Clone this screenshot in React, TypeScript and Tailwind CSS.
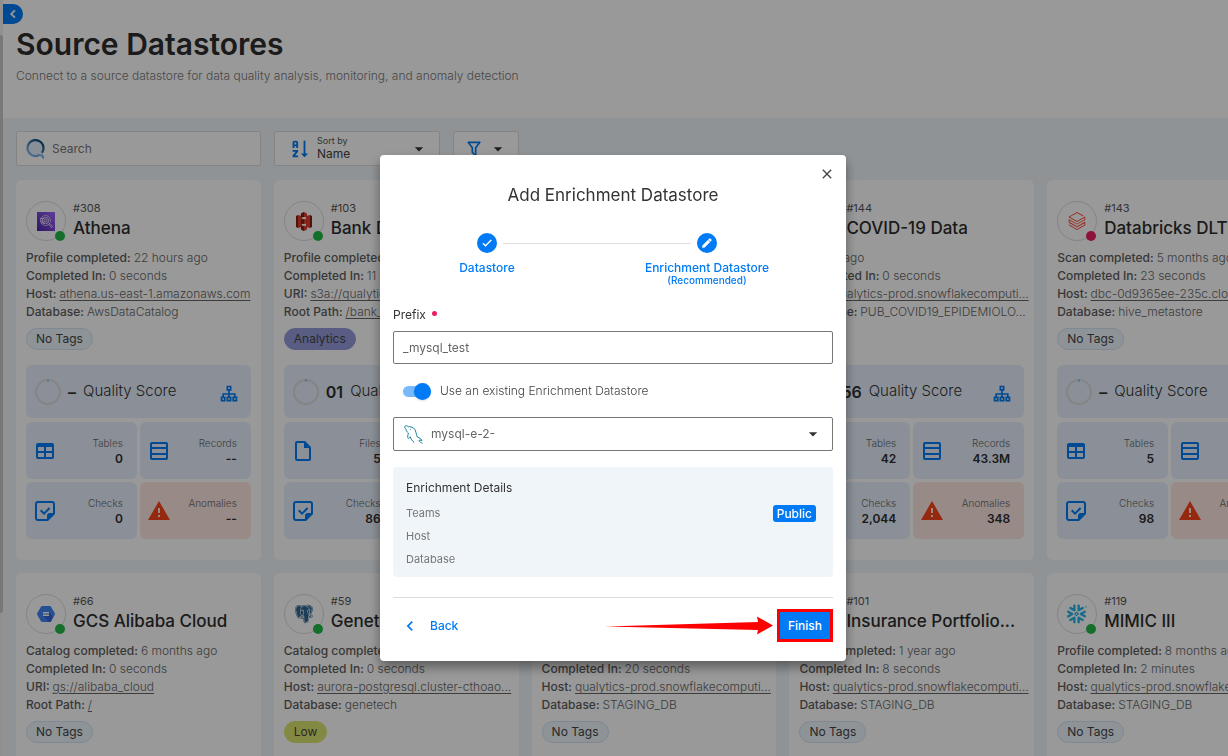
import type { ReactNode } from 'react';
import { BiLogoPostgresql } from 'react-icons/bi';
import { SiDatabricks, SiSnowflake } from 'react-icons/si';
import { TbBrandMysql } from 'react-icons/tb';

const icons = {
  table:
    'M5,4H19A2,2 0 0,1 21,6V18A2,2 0 0,1 19,20H5A2,2 0 0,1 3,18V6A2,2 0 0,1 5,4M5,8V12H11V8H5M13,8V12H19V8H13M5,14V18H11V14H5M13,14V18H19V14H13Z',
  file: 'M14,2H6A2,2 0 0,0 4,4V20A2,2 0 0,0 6,22H18A2,2 0 0,0 20,20V8L14,2M18,20H6V4H13V9H18V20Z',
  records:
    'M5,3H19A2,2 0 0,1 21,5V19A2,2 0 0,1 19,21H5A2,2 0 0,1 3,19V5A2,2 0 0,1 5,3M5,5V8H19V5H5M5,10V14H19V10H5M5,16V19H19V16H5Z',
  checks:
    'M5,2H19A3,3 0 0,1 22,5V15L15,22H5A3,3 0 0,1 2,19V5A3,3 0 0,1 5,2M5,4A1,1 0 0,0 4,5V19A1,1 0 0,0 5,20H14V17A3,3 0 0,1 17,14H20V5A1,1 0 0,0 19,4H5M8.4,10.6L11,13.2L15.9,8.3L17.3,9.7L11,16L7,12L8.4,10.6Z',
  alert: 'M13 14H11V9H13M13 18H11V16H13M1 21H23L12 2L1 21Z',
  sitemap:
    'M9,2H15V8H13V11H20V15H22V21H16V15H18V13H13V15H15V21H9V15H11V13H6V15H8V21H2V15H4V11H11V8H9V2M11,4V6H13V4H11M4,17V19H6V17H4M11,17V19H13V17H11M18,17V19H20V17H18Z',
  sort: 'M19 17H22L18 21L14 17H17V3H19M11 13V15L7.67 19H11V21H5V19L8.33 15H5V13M9 3H7C5.9 3 5 3.9 5 5V11H7V9H9V11H11V5C11 3.9 10.11 3 9 3M9 7H7V5H9Z',
  filter:
    'M15,19.88C15.04,20.18 14.94,20.5 14.71,20.71C14.32,21.1 13.69,21.1 13.3,20.71L9.29,16.7C9.06,16.47 8.96,16.16 9,15.87V10.75L4.21,4.62C3.87,4.19 3.95,3.56 4.38,3.22C4.57,3.08 4.78,3 5,3H19C19.22,3 19.43,3.08 19.62,3.22C20.05,3.56 20.13,4.19 19.79,4.62L15,10.75V19.88M7.04,5L11,10.06V15.58L13,17.58V10.05L16.96,5H7.04Z',
  caret: 'M7,10L12,15L17,10H7Z',
  chevronLeft: 'M15.41,16.58L10.83,12L15.41,7.41L14,6L8,12L14,18L15.41,16.58Z',
  check: 'M21,7L9,19L3.5,13.5L4.91,12.09L9,16.17L19.59,5.59L21,7Z',
  pencil:
    'M20.71,7.04C21.1,6.65 21.1,6 20.71,5.63L18.37,3.29C18,2.9 17.35,2.9 16.96,3.29L15.12,5.12L18.87,8.87M3,17.25V21H6.75L17.81,9.93L14.06,6.18L3,17.25Z',
  close:
    'M19,6.41L17.59,5L12,10.59L6.41,5L5,6.41L10.59,12L5,17.59L6.41,19L12,13.41L17.59,19L19,17.59L13.41,12L19,6.41Z',
};

function Icon({ name, className }: { name: keyof typeof icons; className?: string }) {
  return (
    <svg viewBox="0 0 24 24" fill="currentColor" aria-hidden="true" className={className}>
      <path d={icons[name]} />
    </svg>
  );
}

function AthenaLogo() {
  return (
    <svg viewBox="0 0 18 19" className="w-[18px] h-[19px]" aria-hidden="true">
      <defs>
        <linearGradient id="athena" x1="0" y1="1" x2="1" y2="0">
          <stop offset="0" stopColor="#4d27a8" />
          <stop offset="1" stopColor="#a166ff" />
        </linearGradient>
      </defs>
      <rect width="18" height="19" fill="url(#athena)" />
      <g fill="none" stroke="#fff" strokeWidth="0.7">
        <circle cx="8.5" cy="8.5" r="5" strokeDasharray="2 0.6" />
        <circle cx="8.5" cy="8.5" r="3.2" />
        <circle cx="8.5" cy="8.5" r="1.4" />
        <path d="M3 6.5h4M3 9h3.5M4 11h4M11.5 12l3 3.6 1.2-1.1-3.2-3.2" />
      </g>
    </svg>
  );
}

function S3Logo() {
  return (
    <svg viewBox="0 0 16 19" className="w-4 h-[19px]" aria-hidden="true">
      <path d="M0 4l2-1v13l-2-1zM16 4l-2-1v13l2-1z" fill="#8c1c13" />
      <path d="M2 3l4 1v11l-4 1zM14 3l-4 1v11l4 1z" fill="#d9402f" />
      <path d="M8 0l3 1.5v4L8 5 5 5.5v-4zM8 19l3-1.5v-4L8 14l-3-.5v4zM8 7l3 .5v4l-3 .5-3-.5v-4z" fill="#d9402f" />
      <path d="M8 0L5 1.5v4L8 5zM8 7l-3 .5v4l3 .5zM8 14l-3-.5v4L8 19z" fill="#8c1c13" />
    </svg>
  );
}

function GcsLogo() {
  return (
    <svg viewBox="0 0 18 16" className="w-[18px] h-4" aria-hidden="true">
      <path d="M5 0h8a1 1 0 0 1 .9.5l3.9 6.8a1.4 1.4 0 0 1 0 1.4l-3.9 6.8a1 1 0 0 1-.9.5H5a1 1 0 0 1-.9-.5L.2 8.700a1.4 1.4 0 0 1 0-1.4L4.100.5A1 1 0 0 1 5 0z" fill="#4285f4" />
      <path d="M6.5 10.200L12 6l4 4.700-2.100 4.800a1 1 0 0 1-.9.5H12z" fill="#3367d6" />
      <path d="M6 6h6v1.600H6zM6 8.500h6v1.600H6z" fill="#fff" />
    </svg>
  );
}

function QLogo() {
  return (
    <svg viewBox="0 0 20 20" className="w-5 h-5 shrink-0" aria-hidden="true">
      <defs>
        <linearGradient id="q-ring" x1="1" y1="0" x2="0.2" y2="1">
          <stop offset="0.2" stopColor="#11507f" />
          <stop offset="1" stopColor="#8cc0f0" />
        </linearGradient>
      </defs>
      <circle cx="9.5" cy="9" r="7" fill="#e3eefa" />
      <path d="M12.5 16.500A8 8 0 1 1 17.500 9c0 2-.6 3.600-1.700 5" fill="none" stroke="url(#q-ring)" strokeWidth="2.200" />
      <path d="M12 16l4 0.300 1.200 2.200" fill="none" stroke="#7db4e8" strokeWidth="2.200" strokeLinecap="round" strokeLinejoin="round" />
    </svg>
  );
}

interface Tag {
  label: string;
  style: string;
}

const noTags: Tag = { label: 'No Tags', style: 'border-[#d5e3f2] bg-[#edf5fc]' };
const analytics: Tag = { label: 'Analytics', style: 'border-[#959cdd] bg-[#959cdd]' };
const low: Tag = { label: 'Low', style: 'border-[#dbe46e] bg-[#dbe46e]' };

interface Datastore {
  id: number;
  name: string;
  logo: ReactNode;
  failed?: boolean;
  facts: [label: string, value: string, link?: boolean][];
  tag: Tag;
  score: string;
  files?: boolean;
  counts: [string, string, string, string];
}

const snowflake = <SiSnowflake className="w-5 h-5 text-[#29b5e8]" />;

const datastores: Datastore[] = [
  {
    id: 308,
    name: 'Athena',
    logo: <AthenaLogo />,
    facts: [
      ['Profile completed', '22 hours ago'],
      ['Completed In', '0 seconds'],
      ['Host', 'athena.us-east-1.amazonaws.com', true],
      ['Database', 'AwsDataCatalog'],
    ],
    tag: noTags,
    score: '–',
    counts: ['0', '--', '0', '--'],
  },
  {
    id: 103,
    name: 'Bank Data',
    logo: <S3Logo />,
    facts: [
      ['Profile completed', '1 day ago'],
      ['Completed In', '11 seconds'],
      ['URI', 's3a://qualytics-demo', true],
      ['Root Path', '/bank_data/', true],
    ],
    tag: analytics,
    score: '01',
    files: true,
    counts: ['5', '1M', '86', '12'],
  },
  {
    id: 141,
    name: 'Consolidated',
    logo: snowflake,
    facts: [
      ['Profile completed', '1 day ago'],
      ['Completed In', '4 seconds'],
      ['Host', 'qualytics-prod.snowflakecomputi...', true],
      ['Database', 'STAGING_DB'],
    ],
    tag: noTags,
    score: '47',
    counts: ['8', '36K', '98', '12'],
  },
  {
    id: 144,
    name: 'COVID-19 Data',
    logo: snowflake,
    facts: [
      ['Run', '1h ago'],
      ['Completed In', '0 seconds'],
      ['Host', 'qualytics-prod.snowflakecomputi...', true],
      ['Database', 'PUB_COVID19_EPIDEMIOLO...'],
    ],
    tag: low,
    score: '56',
    counts: ['42', '43.3M', '2,044', '348'],
  },
  {
    id: 143,
    name: 'Databricks DLT',
    logo: <SiDatabricks className="w-[18px] h-[18px] text-[#ff4632]" />,
    failed: true,
    facts: [
      ['Scan completed', '5 months ago'],
      ['Completed In', '23 seconds'],
      ['Host', 'dbc-0d9365ee-235c.cloud...', true],
      ['Database', 'hive_metastore'],
    ],
    tag: noTags,
    score: '–',
    counts: ['5', '36K', '98', '12'],
  },
  {
    id: 66,
    name: 'GCS Alibaba Cloud',
    logo: <GcsLogo />,
    facts: [
      ['Catalog completed', '6 months ago'],
      ['Completed In', '0 seconds'],
      ['URI', 'gs://alibaba_cloud', true],
      ['Root Path', '/', true],
    ],
    tag: noTags,
    score: '–',
    files: true,
    counts: ['0', '--', '0', '--'],
  },
  {
    id: 59,
    name: 'Genetech',
    logo: <BiLogoPostgresql className="w-[22px] h-[22px] text-[#336791]" />,
    facts: [
      ['Catalog completed', '1 day ago'],
      ['Completed In', '0 seconds'],
      ['Host', 'aurora-postgresql.cluster-cthoao...', true],
      ['Database', 'genetech'],
    ],
    tag: low,
    score: '–',
    counts: ['3', '--', '0', '--'],
  },
  {
    id: 100,
    name: 'Human Resources',
    logo: snowflake,
    facts: [
      ['Profile completed', '1 year ago'],
      ['Completed In', '20 seconds'],
      ['Host', 'qualytics-prod.snowflakecomputi...', true],
      ['Database', 'STAGING_DB'],
    ],
    tag: noTags,
    score: '–',
    counts: ['3', '--', '0', '--'],
  },
  {
    id: 101,
    name: 'Insurance Portfolio...',
    logo: snowflake,
    facts: [
      ['Scan completed', '1 year ago'],
      ['Completed In', '8 seconds'],
      ['Host', 'qualytics-prod.snowflakecomputi...', true],
      ['Database', 'STAGING_DB'],
    ],
    tag: noTags,
    score: '–',
    counts: ['3', '--', '0', '--'],
  },
  {
    id: 119,
    name: 'MIMIC III',
    logo: snowflake,
    facts: [
      ['Profile completed', '8 months ago'],
      ['Completed In', '2 minutes'],
      ['Host', 'qualytics-prod.snowflakecomputi...', true],
      ['Database', 'STAGING_DB'],
    ],
    tag: noTags,
    score: '–',
    counts: ['3', '--', '0', '--'],
  },
];

function Metric({ icon, label, value, alert }: { icon: keyof typeof icons; label: string; value: string; alert?: boolean }) {
  return (
    <div className={`flex items-center justify-between h-[57px] rounded-md pl-[7px] pr-[14px] ${alert ? 'bg-[#fee6e1] text-[#f9451a]' : 'bg-[#e8f1fd] text-[#007bf5]'}`}>
      <Icon name={icon} className="w-6 h-6" />
      <div className="text-right">
        <div className="text-[10px] leading-4 font-light text-[#666]">{label}</div>
        <div className="text-[12px] leading-4 font-semibold text-[#2d2d2d]">{value}</div>
      </div>
    </div>
  );
}

function DatastoreCard({ store }: { store: Datastore }) {
  const [first, records, checks, anomalies] = store.counts;

  return (
    <article className="min-w-0 rounded-md bg-white px-[10px] pt-[21px] pb-[21px]">
      <header className="flex gap-[7px]">
        <div className="relative flex items-center justify-center w-10 h-10 shrink-0 rounded-full border border-[#ddd]">
          {store.logo}
          <span className={`absolute right-0 -bottom-px w-[10px] h-[10px] rounded-full ${store.failed ? 'bg-[#e91e63]' : 'bg-[#21ba45]'}`} />
        </div>
        <div className="min-w-0">
          <div className="text-[11px] leading-[15px] text-[#555]">#{store.id}</div>
          <h2 className="text-[17px] leading-[25px] font-medium whitespace-nowrap text-[#2d2d2d]">{store.name}</h2>
        </div>
      </header>

      <dl className="mt-2 text-[12px] leading-[18px] text-[#666]">
        {store.facts.map(([label, value, link]) => (
          <div key={label} className="flex gap-[3px] whitespace-nowrap">
            <dt className="font-medium text-[#5c5c5c]">{label}:</dt>
            <dd className="font-light">
              {link ? <a href="#" className="underline underline-offset-2">{value}</a> : value}
            </dd>
          </div>
        ))}
      </dl>

      <span className={`mt-[7px] flex items-center w-fit h-[22px] rounded-full border px-[9px] text-[12px] text-[#444] ${store.tag.style}`}>
        {store.tag.label}
      </span>

      <div className="mt-[15px] flex items-center h-[53px] rounded-md bg-[#e8f1fd] pl-[9px] pr-3">
        <svg viewBox="0 0 26 26" fill="none" className="w-[26px] h-[26px]" aria-hidden="true">
          <circle cx="13" cy="13" r="12" stroke="#dcdcdc" strokeWidth="2" />
          <path d="M13 0v3" stroke="#64b5f6" />
        </svg>
        <span className="ml-[7px] text-[16px] font-semibold text-[#2d2d2d]">{store.score}</span>
        <span className="ml-[7px] text-[15px] font-light text-[#333]">Quality Score</span>
        <Icon name="sitemap" className="ml-auto mt-1 w-5 h-5 text-[#007bf5]" />
      </div>

      <div className="mt-1 grid grid-cols-2 gap-[3px]">
        <Metric icon={store.files ? 'file' : 'table'} label={store.files ? 'Files' : 'Tables'} value={first} />
        <Metric icon="records" label="Records" value={records} />
        <Metric icon="checks" label="Checks" value={checks} />
        <Metric icon="alert" label="Anomalies" value={anomalies} alert />
      </div>
    </article>
  );
}

function Toolbar() {
  return (
    <div className="flex gap-[13px]">
      <label className="flex items-center gap-[6px] w-[245px] h-[35px] rounded-xs border border-[#dcdcdc] bg-white px-[9px]">
        <QLogo />
        <input type="search" aria-label="Search datastores" placeholder="Search" className="w-full text-[12px] leading-4 outline-none placeholder:text-[#777]" />
      </label>

      <div className="flex items-center w-[166px] h-[35px] rounded-xs border border-[#dcdcdc] bg-white pl-[13px] pr-[10px]">
        <Icon name="sort" className="w-[22px] h-[22px] text-[#007bf5]" />
        <div className="ml-[7px] mb-px flex-1">
          <label htmlFor="sort" className="block text-[9px] leading-[12px] text-[#555]">Sort by</label>
          <select id="sort" className="block w-full appearance-none text-[12px] leading-[14px] text-[#444]">
            <option>Name</option>
          </select>
        </div>
        <Icon name="caret" className="w-5 h-5 text-[#333]" />
      </div>

      <button type="button" aria-label="Filter" className="flex items-center gap-1 h-[35px] rounded-xs border border-[#dcdcdc] bg-white px-[10px]">
        <Icon name="filter" className="w-5 h-5 text-[#007bf5]" />
        <Icon name="caret" className="w-5 h-5 text-[#333]" />
      </button>
    </div>
  );
}

function Step({ icon, label, note, last }: { icon: 'check' | 'pencil'; label: string; note?: string; last?: boolean }) {
  return (
    <li className="text-center text-[#007bf5]">
      <div className="flex items-center">
        <span className={`flex-1 h-px mr-[6px] ${last ? 'bg-[#ddd]' : ''}`} />
        <span className="flex items-center justify-center w-5 h-5 rounded-full bg-[#007bf5] text-white">
          <Icon name={icon} className="w-3 h-3 stroke-current stroke-1" />
        </span>
        <span className={`flex-1 h-px ml-[6px] ${last ? '' : 'bg-[#ddd]'}`} />
      </div>
      <div className="mt-2 text-[12px] leading-[14px] font-medium">{label}</div>
      {note && <div className="text-[10px] leading-[11px] font-medium">{note}</div>}
    </li>
  );
}

function EnrichmentDialog() {
  return (
    <div role="dialog" aria-modal="true" aria-labelledby="dialog-title" className="w-full max-w-[466px] rounded-sm bg-white px-[13px] pb-[19px] shadow-[0_6px_12px_rgba(0,0,0,0.4)]">
      <div className="flex justify-end -mr-0.5 pt-[11px]">
        <button type="button" aria-label="Close" className="text-[#444]">
          <Icon name="close" className="w-4 h-4" />
        </button>
      </div>
      <h2 id="dialog-title" className="mt-px text-center text-[17px] leading-6 text-[#333]">Add Enrichment Datastore</h2>

      <ol className="-ml-4 mr-4 mt-[26px] grid grid-cols-2">
        <Step icon="check" label="Datastore" />
        <Step icon="pencil" label="Enrichment Datastore" note="(Recommended)" last />
      </ol>

      <label htmlFor="prefix" className="mt-[21px] flex items-center gap-[6px] text-[12px] leading-4 text-[#333]">
        Prefix
        <span className="mb-1 w-[5px] h-[5px] rounded-full bg-[#e91e63]" />
      </label>
      <input id="prefix" defaultValue="_mysql_test" className="mt-2 block w-full h-[33px] rounded-xs border border-[#777] px-[9px] text-[12px] text-[#666] outline-none" />

      <label className="mt-[18px] ml-[10px] flex items-center gap-[9px] text-[12px] leading-[18px] font-light text-[#444]">
        <input type="checkbox" role="switch" defaultChecked className="sr-only" />
        <span className="flex items-center justify-end w-7 h-[11px] rounded-full bg-[#78b9fa]">
          <span className="w-[17px] h-[17px] rounded-full bg-[#007bf5] shadow-sm" />
        </span>
        Use an existing Enrichment Datastore
      </label>

      <div className="mt-[17px] flex items-center h-[34px] rounded-xs border border-[#777] pl-2 pr-[9px]">
        <TbBrandMysql className="w-[22px] h-[22px] stroke-1 text-[#00758f]" />
        <select aria-label="Enrichment datastore" className="ml-[7px] flex-1 h-full appearance-none text-[12px] text-[#666] outline-none">
          <option>mysql-e-2-</option>
        </select>
        <Icon name="caret" className="w-5 h-5 text-[#333]" />
      </div>

      <section className="mt-4 rounded-sm bg-[#f0f5fa] pt-3 pb-[7px] pl-[13px] pr-[17px] text-[#777]">
        <h3 className="text-[12px] leading-[18px] text-[#333]">Enrichment Details</h3>
        <dl className="mt-1 text-[11px]">
          <div className="flex items-center justify-between h-6">
            <dt>Teams</dt>
            <dd className="rounded-[3px] bg-[#007bf5] px-1 text-[12px] leading-[17px] font-medium text-white">Public</dd>
          </div>
          <div className="flex items-center h-[23px]">
            <dt>Host</dt>
          </div>
          <div className="flex items-center h-[22px]">
            <dt>Database</dt>
          </div>
        </dl>
      </section>

      <footer className="mt-5 flex items-center border-t border-[#ddd] pt-[11px]">
        <button type="button" className="flex items-center gap-[10px] pl-[7px] text-[12px] font-medium text-[#007bf5]">
          <Icon name="chevronLeft" className="w-5 h-5" />
          Back
        </button>
        <svg viewBox="0 0 168 20" className="ml-auto mr-1 w-[168px] h-5" aria-hidden="true">
          <path d="M0 10.500L153 6 152 0.500 168 9.500 152 18.500 153 14z" fill="#f00" />
        </svg>
        <button type="button" className="w-14 h-[33px] border-[3px] border-[#f00] bg-[#007bf5] text-[12px] font-medium text-white">
          Finish
        </button>
      </footer>
    </div>
  );
}

export default function App() {
  return (
    <div className="h-screen overflow-hidden flex bg-white font-['Inter',sans-serif]">
      {/* Scroll track of the collapsed sidebar */}
      <div className="w-[3px] shrink-0 bg-[#f1f1f1] pt-[35px]">
        <div className="h-[578px] rounded-tr-sm rounded-br-sm bg-[#c8c8c8]" />
      </div>

      <main className="flex-1 min-w-0 bg-[#f0f6fb]">
        <header className="h-[118px] bg-white pt-1">
          <button type="button" aria-label="Collapse menu" className="flex items-center justify-center w-5 h-5 rounded-r-full bg-[#007bf5] text-white">
            <Icon name="chevronLeft" className="w-4 h-4 stroke-current stroke-1" />
          </button>
          <div className="px-[13px]">
            <h1 className="text-[30px] leading-10 font-semibold text-[#2d2d2d]">Source Datastores</h1>
            <p className="mt-1 text-[12px] leading-4 font-light text-[#777]">
              Connect to a source datastore for data quality analysis, monitoring, and anomaly detection
            </p>
          </div>
        </header>

        <div className="px-[13px] pt-[13px]">
          <Toolbar />
          <div className="mt-[14px] -mr-[77px] grid grid-cols-5 gap-[13px]">
            {datastores.map(store => (
              <DatastoreCard key={store.id} store={store} />
            ))}
          </div>
        </div>
      </main>

      <div className="fixed inset-0 flex items-start justify-center bg-black/40 pt-[155px] pr-0.5">
        <EnrichmentDialog />
      </div>
    </div>
  );
}
